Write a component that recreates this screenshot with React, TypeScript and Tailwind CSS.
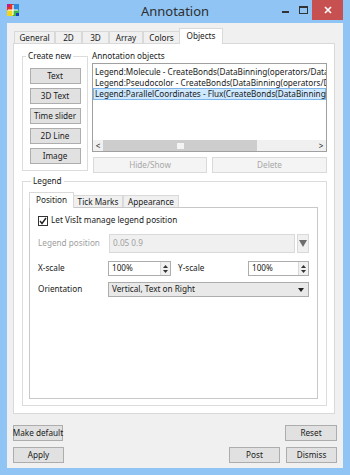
import clsx from "clsx";

function Btn({ children, className, disabled }: { children: React.ReactNode; className?: string; disabled?: boolean }) {
  return (
    <button
      className={clsx(
        "flex items-center justify-center border h-[16px] leading-none whitespace-nowrap",
        disabled ? "border-[#dadada] bg-[#f4f4f4] text-[#a8a8a8]" : "border-[#adadad] bg-[#e1e1e1] text-[#1a1a1a]",
        className
      )}
    >
      {children}
    </button>
  );
}

function Tab({ label, active, className }: { label: string; active?: boolean; className?: string }) {
  return (
    <div
      className={clsx(
        "flex items-center justify-center border-t border-l border-r border-[#d9d9d9] leading-none",
        active ? "bg-white h-[16px] relative z-10 -mx-[1px]" : "bg-[#f0f0f0] h-[13px]",
        className
      )}
    >
      {label}
    </div>
  );
}

function SpinArrows() {
  return (
    <div className="w-[10px] h-full border-l border-[#d9d9d9] bg-[#f0f0f0] flex flex-col items-center justify-center gap-[2px]">
      <svg width="5" height="3" viewBox="0 0 5 3"><path d="M0 3 L2.5 0 L5 3 Z" fill="#333" /></svg>
      <svg width="5" height="3" viewBox="0 0 5 3"><path d="M0 0 L2.5 3 L5 0 Z" fill="#333" /></svg>
    </div>
  );
}

function AppIcon() {
  return (
    <svg width="12" height="12" viewBox="0 0 12 12">
      <rect x="0" y="0" width="6" height="6" fill="#e8321e" />
      <rect x="6" y="0" width="6" height="6" fill="#2a8ae0" />
      <rect x="0" y="6" width="6" height="6" fill="#f2d41a" />
      <rect x="6" y="6" width="6" height="6" fill="#3cb84a" />
      <rect x="0" y="0" width="3" height="3" fill="#c21a8a" />
      <rect x="9" y="9" width="3" height="3" fill="#1a3fc2" />
      <path d="M6 1 V11 M1 6 H11" stroke="#fff" strokeWidth="1.2" />
    </svg>
  );
}

export default function App() {
  return (
    <div className="w-[350px] h-[475px] bg-[#8fc4f4] flex flex-col overflow-hidden font-['Noto_Sans',sans-serif] text-[8.2px] text-[#1a1a1a]">
      {/* title bar */}
      <div className="h-[23px] grid grid-cols-[1fr_auto_1fr] items-start">
        <div className="pl-[7px] pt-[4px]">
          <AppIcon />
        </div>
        <div className="pt-[3px] text-[13px] text-[#2e2e2e] leading-[16px]">Annotation</div>
        <div className="flex justify-end items-start pr-[7px]">
          <div className="w-[18px] h-[20px] flex items-center justify-center">
            <div className="w-[7px] h-[2px] bg-[#333] mt-[4px]" />
          </div>
          <div className="w-[18px] h-[20px] flex items-center justify-center">
            <div className="w-[9px] h-[8px] border border-[#333] border-t-2" />
          </div>
          <div className="w-[31px] h-[20px] bg-[#c75050] flex items-center justify-center">
            <svg width="8" height="8" viewBox="0 0 8 8"><path d="M1 1 L7 7 M7 1 L1 7" stroke="#fff" strokeWidth="1.6" /></svg>
          </div>
        </div>
      </div>

      {/* client area */}
      <div className="mx-[7px] mb-[7px] flex-1 bg-[#f0f0f0] flex flex-col px-[6px] pt-[5px] pb-[5px]">
        <div className="flex items-end h-[16px] pl-[1px] -mb-[1px]">
          <Tab label="General" className="w-[41px]" />
          <Tab label="2D" className="w-[27px]" />
          <Tab label="3D" className="w-[27px]" />
          <Tab label="Array" className="w-[34px]" />
          <Tab label="Colors" className="w-[37px]" />
          <Tab label="Objects" active className="w-[44px]" />
        </div>

        <div className="flex-1 mr-[2px] border border-[#d9d9d9] bg-white flex flex-col pt-[7px] pl-[8px] pr-[7px] pb-[7px]">
          <div className="flex gap-[4px]">
            <fieldset className="w-[66px] h-[120px] border border-[#dcdcdc]">
              <legend className="ml-[3px] px-[2px] leading-[10px]">Create new</legend>
              <div className="flex flex-col items-center gap-[4px] pt-[7px]">
                <Btn className="w-[51px]">Text</Btn>
                <Btn className="w-[51px]">3D Text</Btn>
                <Btn className="w-[51px]">Time slider</Btn>
                <Btn className="w-[51px]">2D Line</Btn>
                <Btn className="w-[51px]">Image</Btn>
              </div>
            </fieldset>
            <div className="w-[235px] flex flex-col">
              <div className="leading-[10px] h-[12px]">Annotation objects</div>
              <div className="h-[89px] border border-[#a0a0a0] flex flex-col">
                <div className="flex-1 flex flex-col pt-[2px] whitespace-nowrap overflow-hidden">
                  <div className="h-[11px] leading-[11px] pl-[2px]">Legend:Molecule - CreateBonds(DataBinning(operators/Data</div>
                  <div className="h-[11px] leading-[11px] pl-[2px]">Legend:Pseudocolor - CreateBonds(DataBinning(operators/D</div>
                  <div className="h-[12px] leading-[10px] pl-[1px] bg-[#cde8ff] border border-[#7fb6ea]">Legend:ParallelCoordinates - Flux(CreateBonds(DataBinning(o</div>
                </div>
                <div className="h-[11px] flex bg-[#e8e8e8] text-[8px] leading-none">
                  <div className="w-[10px] flex items-center justify-center bg-[#f0f0f0]">&lt;</div>
                  <div className="w-[154px] bg-[#cdcdcd] flex items-center pl-[74px]">
                    <div className="w-[7px] h-[6px] bg-[#f4f4f4]" />
                  </div>
                  <div className="flex-1 bg-[#f0f0f0]" />
                  <div className="w-[10px] flex items-center justify-center bg-[#f0f0f0]">&gt;</div>
                </div>
              </div>
              <div className="flex gap-[5px] mt-[5px] pl-[1px]">
                <Btn disabled className="w-[114px]">Hide/Show</Btn>
                <Btn disabled className="flex-1">Delete</Btn>
              </div>
            </div>
          </div>

          <fieldset className="mt-[3px] flex-1 border border-[#dcdcdc] pl-[6px] pr-[8px] pb-[6px] flex flex-col">
            <legend className="ml-[2px] px-[2px] leading-[10px]">Legend</legend>
            <div className="flex items-end h-[17px] mt-[5px] pl-[1px] -mb-[1px]">
              <Tab label="Position" active className="w-[45px]" />
              <Tab label="Tick Marks" className="w-[50px]" />
              <Tab label="Appearance" className="w-[56px]" />
            </div>
            <div className="flex-1 border border-[#c8c8c8] bg-white pl-[8px] pr-[8px] pt-[7px] flex flex-col">
              <div className="flex items-center h-[11px]">
                <div className="w-[10px] h-[10px] border border-[#333] flex items-center justify-center">
                  <svg width="8" height="8" viewBox="0 0 8 8"><path d="M1 4 L3 6.5 L7 1" stroke="#222" strokeWidth="1.4" fill="none" /></svg>
                </div>
                <span className="ml-[3px]">Let VisIt manage legend position</span>
              </div>
              <div className="flex items-center h-[19px] mt-[8px]">
                <div className="w-[71px] text-[#a0a0a0]">Legend position</div>
                <div className="flex-1 h-full border border-[#d9d9d9] bg-[#f0f0f0] text-[#a0a0a0] flex items-center pl-[3px]">0.05 0.9</div>
                <div className="w-[12px] h-full ml-[2px] border border-[#d9d9d9] bg-[#f0f0f0] flex items-center justify-center">
                  <svg width="8" height="7" viewBox="0 0 8 7"><path d="M0 0 H8 L4 7 Z" fill="#6d6d6d" /></svg>
                </div>
              </div>
              <div className="flex items-center h-[15px] mt-[8px]">
                <div className="w-[70px]">X-scale</div>
                <div className="w-[63px] h-full border border-[#adadad] flex items-center">
                  <div className="flex-1 pl-[3px]">100%</div>
                  <SpinArrows />
                </div>
                <div className="w-[70px] ml-[7px]">Y-scale</div>
                <div className="flex-1 h-full border border-[#adadad] flex items-center">
                  <div className="flex-1 pl-[3px]">100%</div>
                  <SpinArrows />
                </div>
              </div>
              <div className="flex items-center h-[15px] mt-[6px]">
                <div className="w-[70px]">Orientation</div>
                <div className="flex-1 h-full border border-[#adadad] bg-[#e9e9e9] flex items-center pl-[3px] pr-[4px]">
                  <div className="flex-1">Vertical, Text on Right</div>
                  <svg width="6" height="4" viewBox="0 0 6 4"><path d="M0 0 H6 L3 4 Z" fill="#222" /></svg>
                </div>
              </div>
            </div>
          </fieldset>
        </div>

        <div className="flex justify-between mt-[11px]">
          <Btn className="w-[50px]">Make default</Btn>
          <Btn className="w-[52px]">Reset</Btn>
        </div>
        <div className="flex mt-[6px] gap-[6px]">
          <Btn className="w-[51px]">Apply</Btn>
          <div className="flex-1" />
          <Btn className="w-[51px]">Post</Btn>
          <Btn className="w-[51px]">Dismiss</Btn>
        </div>
      </div>
    </div>
  );
}
